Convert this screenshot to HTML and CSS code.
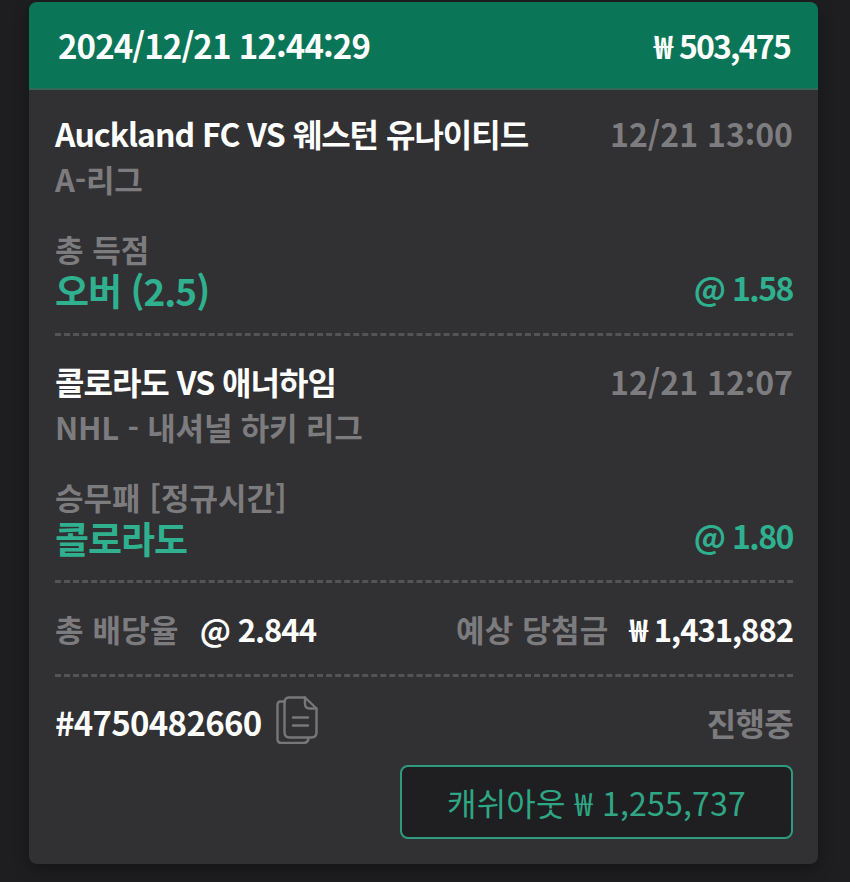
FILE: index.html
```html
<!DOCTYPE html>
<html lang="ko">
<head>
    <meta charset="UTF-8">
    <meta name="viewport" content="width=device-width, initial-scale=1.0">
    <title>Bet slip</title>
    <link rel="stylesheet" href="styles.css">
</head>
<body>
    <div class="card">
        <div class="card-header">
            <span>2024/12/21 12:44:29</span>
            <span class="balance"><span class="won">₩</span><span>503,475</span></span>
        </div>
        <div class="card-body">
            <div class="bet">
                <div class="row">
                    <span class="match">Auckland FC VS 웨스턴 유나이티드</span>
                    <span class="time">12/21 13:00</span>
                </div>
                <div class="league">A-리그</div>
                <div class="market">총 득점</div>
                <div class="row pick-row">
                    <span class="pick">오버 (2.5)</span>
                    <span class="odds">@ 1.58</span>
                </div>
            </div>
            <div class="bet">
                <div class="row">
                    <span class="match">콜로라도 VS 애너하임</span>
                    <span class="time">12/21 12:07</span>
                </div>
                <div class="league">NHL - 내셔널 하키 리그</div>
                <div class="market">승무패 [정규시간]</div>
                <div class="row pick-row">
                    <span class="pick">콜로라도</span>
                    <span class="odds">@ 1.80</span>
                </div>
            </div>
            <div class="row totals">
                <span class="total-group">
                    <span class="total-label">총 배당율</span>
                    <span class="total-value">@ 2.844</span>
                </span>
                <span class="total-group">
                    <span class="total-label">예상 당첨금</span>
                    <span class="total-value balance"><span class="won">₩</span><span>1,431,882</span></span>
                </span>
            </div>
            <div class="row ticket">
                <span class="ticket-id">
                    #4750482660
                    <svg class="copy-icon" width="42" height="48" viewBox="0 0 42 48" fill="none" stroke="#77777a" stroke-width="2.4" stroke-linejoin="round" stroke-linecap="round">
                        <path d="M9 5.500 H4.500 Q1.500 5.500 1.500 9 V43 Q1.500 47 5.500 47 H27 Q32 47 32.500 42.500"/>
                        <path d="M13 1.500 H29 L40.500 12.500 V36 Q40.500 41.500 35.500 41.500 H13.500 Q8.500 41.500 8.500 36 V6.500 Q8.500 1.500 13 1.500 Z"/>
                        <path d="M29 1.500 V8 Q29 12.500 33.500 12.500 H40.500"/>
                        <path d="M17 21.500 H32 M17 29.500 H32"/>
                    </svg>
                </span>
                <span class="status">진행중</span>
            </div>
            <div class="actions">
                <button class="cashout">캐쉬아웃 ₩ 1,255,737</button>
            </div>
        </div>
    </div>
</body>
</html>
```

FILE: styles.css
```css
body {
    font-family: "Noto Sans CJK KR", "Noto Sans", sans-serif;
    background-color: #1e1d20;
    margin: 0;
    height: 882px;
    overflow: hidden;
}
.card {
    width: 789px;
    height: 862px;
    margin: 2px 0 0 29px;
    background-color: #313033;
    border-radius: 8px;
    box-shadow: 0 6px 16px rgba(0, 0, 0, 0.3);
    overflow: hidden;
}
.card-header {
    height: 86px;
    padding: 0 28px 0 29px;
    background-color: #0a7557;
    border-bottom: 2px solid #35665a;
    display: flex;
    justify-content: space-between;
    align-items: center;
    color: #fff;
    font-size: 33px;
    font-weight: 700;
    letter-spacing: -0.9px;
}
.balance {
    display: flex;
    align-items: center;
    gap: 6px;
    font-size: 32px;
    letter-spacing: -1.8px;
}
.won {
    letter-spacing: 0;
}
.card-body {
    padding: 18px 25px 0 26px;
}
.row {
    display: flex;
    justify-content: space-between;
    align-items: center;
}
.bet {
    height: 227px;
    margin-bottom: 20px;
    border-bottom: 3px dashed #545356;
    box-sizing: border-box;
}
.bet:first-child {
    height: 228px;
}
.match {
    color: #fff;
    font-size: 32px;
    font-weight: 700;
    letter-spacing: -1px;
    line-height: 50px;
}
.time {
    color: #7d7c7f;
    font-size: 32px;
    font-weight: 700;
}
.league {
    color: #7c7b7e;
    font-size: 31px;
    font-weight: 700;
    letter-spacing: -0.2px;
    line-height: 42px;
}
.market {
    margin-top: 31px;
    color: #7c7b7e;
    font-size: 31px;
    font-weight: 700;
    line-height: 36px;
}
.pick-row {
    margin-top: -3px;
}
.pick {
    color: #2fb08e;
    font-size: 37px;
    font-weight: 700;
    letter-spacing: -1px;
    line-height: 40px;
}
.odds {
    margin-bottom: 6px;
    color: #2fb08e;
    font-size: 32px;
    font-weight: 700;
    letter-spacing: -1.5px;
}
.totals {
    height: 74px;
    padding-bottom: 21px;
    border-bottom: 3px dashed #545356;
    box-sizing: border-box;
}
.total-group {
    display: flex;
    align-items: center;
    gap: 21px;
}
.total-label {
    color: #7c7b7e;
    font-size: 31px;
    font-weight: 700;
    letter-spacing: 0.2px;
}
.total-value {
    color: #fff;
    font-size: 31px;
    font-weight: 700;
    letter-spacing: -1px;
}
.total-value.balance {
    gap: 6px;
}
.ticket {
    height: 88px;
    padding-top: 2px;
    box-sizing: border-box;
}
.ticket-id {
    display: flex;
    align-items: center;
    gap: 15px;
    color: #fff;
    font-size: 33px;
    font-weight: 700;
    letter-spacing: -0.7px;
}
.copy-icon {
    margin-top: -4px;
}
.status {
    color: #7c7b7e;
    font-size: 32px;
    font-weight: 700;
    letter-spacing: -0.7px;
}
.actions {
    display: flex;
    justify-content: flex-end;
}
.cashout {
    width: 393px;
    height: 74px;
    background-color: #1f1e21;
    border: 2px solid #2e9b7e;
    border-radius: 8px;
    color: #2fa684;
    font-family: inherit;
    font-size: 32px;
    font-weight: 400;
    letter-spacing: 0.2px;
}
```
